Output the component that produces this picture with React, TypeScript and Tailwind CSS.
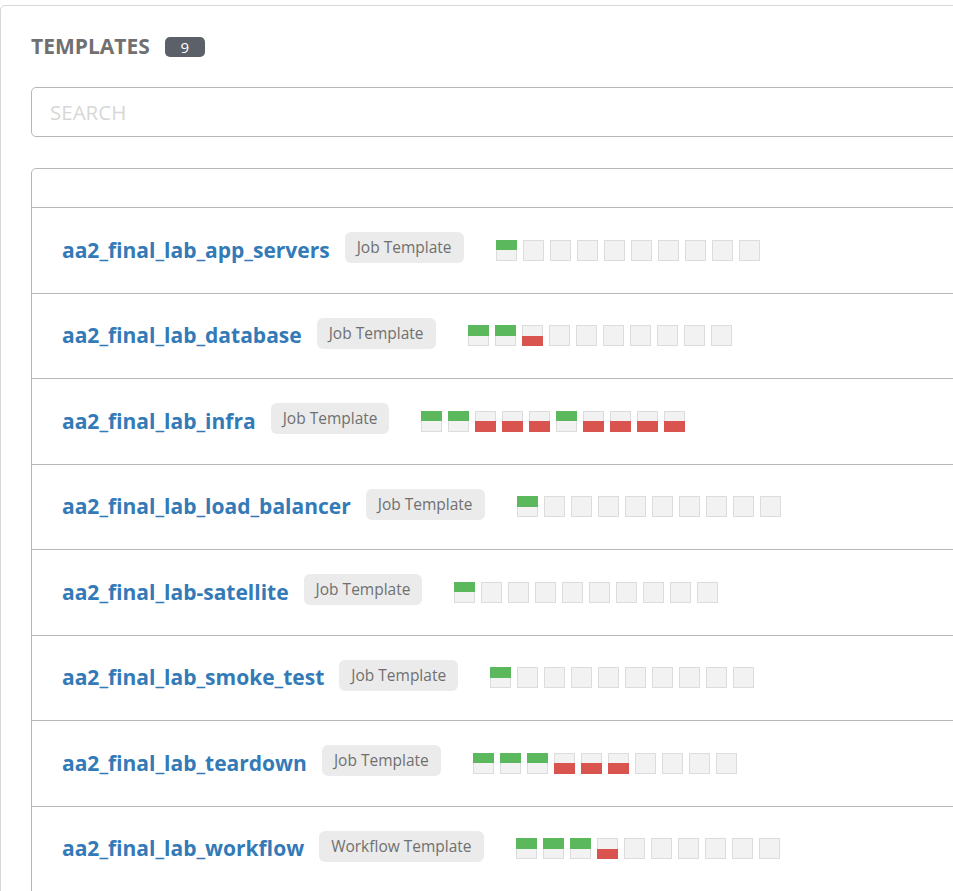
type Run = 'g' | 'r' | 'e';

interface Template {
  name: string;
  kind: string;
  runs: Run[];
}

const fill = (runs: Run[]): Run[] => [...runs, ...Array(10 - runs.length).fill('e')];

const TEMPLATES: Template[] = [
  { name: 'aa2_final_lab_app_servers', kind: 'Job Template', runs: fill(['g']) },
  { name: 'aa2_final_lab_database', kind: 'Job Template', runs: fill(['g', 'g', 'r']) },
  { name: 'aa2_final_lab_infra', kind: 'Job Template', runs: ['g', 'g', 'r', 'r', 'r', 'g', 'r', 'r', 'r', 'r'] },
  { name: 'aa2_final_lab_load_balancer', kind: 'Job Template', runs: fill(['g']) },
  { name: 'aa2_final_lab-satellite', kind: 'Job Template', runs: fill(['g']) },
  { name: 'aa2_final_lab_smoke_test', kind: 'Job Template', runs: fill(['g']) },
  { name: 'aa2_final_lab_teardown', kind: 'Job Template', runs: fill(['g', 'g', 'g', 'r', 'r', 'r']) },
  { name: 'aa2_final_lab_workflow', kind: 'Workflow Template', runs: fill(['g', 'g', 'g', 'r']) },
];

function RunBox({ run }: { run: Run }) {
  return (
    <div className="flex h-[21px] w-[21px] flex-col">
      {run === 'g' ? (
        <div className="h-[10.5px] bg-[#5cb85c]" />
      ) : (
        <div className="h-[10.5px] border-x border-t border-[#dcdcdc] bg-[#f2f2f2]" />
      )}
      {run === 'r' ? (
        <div className="h-[10.5px] bg-[#d9534f]" />
      ) : (
        <div className="h-[10.5px] border-x border-b border-[#dcdcdc] bg-[#f2f2f2]" />
      )}
    </div>
  );
}

function TemplateRow({ t }: { t: Template }) {
  return (
    <div className="flex h-[85.5px] items-center border-t border-[#b7b7b7] pl-[30px]">
      <a className="text-[21px] font-bold text-[#337ab7]">{t.name}</a>
      <span className="mb-[5px] ml-[15px] rounded-md bg-[#ebebeb] px-[12px] py-[5px] text-[15.5px] leading-[21px] text-[#707070]">
        {t.kind}
      </span>
      <div className="ml-[32px] flex gap-[6px]">
        {t.runs.map((r, i) => (
          <RunBox key={i} run={r} />
        ))}
      </div>
    </div>
  );
}

export default function App() {
  return (
    <div
      className="h-[891px] w-[953px] overflow-hidden bg-white pt-[5px]"
      style={{ fontFamily: '"Open Sans", "Noto Sans", sans-serif' }}
    >
      <div className="h-[1000px] w-[1100px] rounded-tl-[5px] border border-[#d7d7d7] px-[30px] pt-[26px]">
        <div className="flex h-[30px] items-center gap-[15px]">
          <h2 className="text-[21px] font-bold text-[#707070]">TEMPLATES</h2>
          <span className="flex h-[20px] w-[40px] items-center justify-center rounded-[5px] bg-[#5c6068] text-[15px] text-white">
            9
          </span>
        </div>
        <div className="mt-[25px] flex h-[50px] items-center rounded-[5px] border border-[#b7b7b7] px-[18px]">
          <span className="text-[20.5px] text-[#d7d7d7]">SEARCH</span>
        </div>
        <div className="mt-[31px] rounded-t-[5px] border border-[#b7b7b7]">
          <div className="h-[38px]" />
          {TEMPLATES.map((t) => (
            <TemplateRow key={t.name} t={t} />
          ))}
        </div>
      </div>
    </div>
  );
}
